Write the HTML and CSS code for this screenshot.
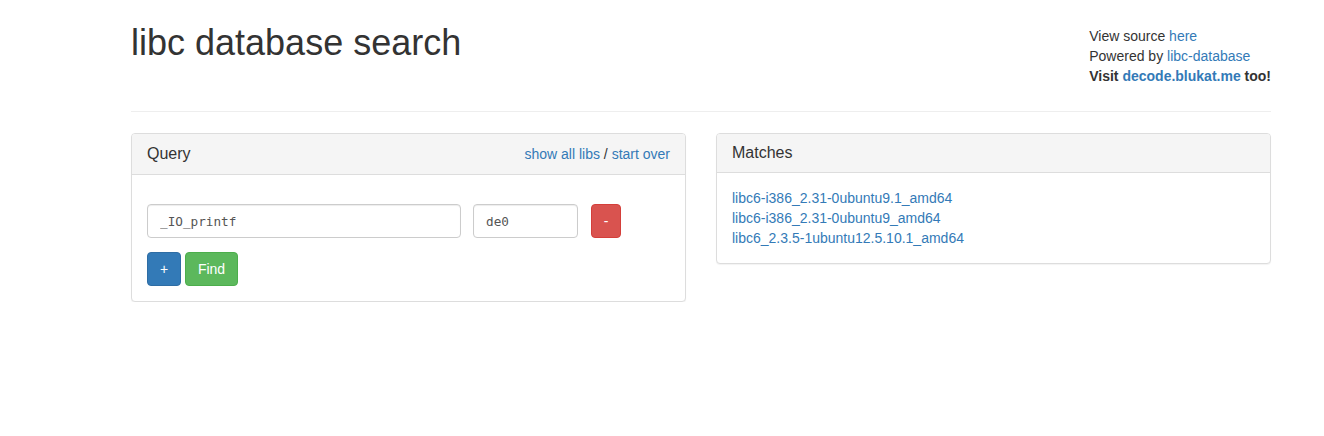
FILE: index.html
```html
<!DOCTYPE html>
<html>
<head>
<meta charset="utf-8">
<title>libc database search</title>
<link rel="stylesheet" href="styles.css">
</head>
<body>
<div class="container">
  <div class="page-header">
    <h1 class="title">libc database search</h1>
    <div class="about">
      <div>View source <a href="#">here</a></div>
      <div>Powered by <a href="#">libc-database</a></div>
      <div class="bold">Visit <a href="#">decode.blukat.me</a> too!</div>
    </div>
  </div>
  <div class="row">
    <div class="panel">
      <div class="panel-heading query-heading">
        <span class="panel-title">Query</span>
        <span class="heading-links"><a href="#">show all libs</a> / <a href="#">start over</a></span>
      </div>
      <div class="panel-body query-body">
        <div class="query-row">
          <input class="form-control sym" type="text" value="_IO_printf">
          <input class="form-control addr" type="text" value="de0">
          <button class="btn btn-danger btn-remove">-</button>
        </div>
        <div class="button-row">
          <button class="btn btn-primary btn-add">+</button>
          <button class="btn btn-success btn-find">Find</button>
        </div>
      </div>
    </div>
    <div class="panel matches-panel">
      <div class="panel-heading">
        <span class="panel-title">Matches</span>
      </div>
      <div class="panel-body">
        <div><a href="#">libc6-i386_2.31-0ubuntu9.1_amd64</a></div>
        <div><a href="#">libc6-i386_2.31-0ubuntu9_amd64</a></div>
        <div><a href="#">libc6_2.3.5-1ubuntu12.5.10.1_amd64</a></div>
      </div>
    </div>
  </div>
</div>
</body>
</html>
```
FILE: styles.css
```css
* { box-sizing: border-box; }
html, body { margin: 0; padding: 0; background: #fff; }
body {
  font-family: "Liberation Sans", Arial, Helvetica, sans-serif;
  font-size: 14px;
  line-height: 20px;
  color: #333;
}
a { color: #337ab7; text-decoration: none; }
.container {
  width: 1140px;
  margin-left: 131px;
}
.page-header {
  display: flex;
  justify-content: space-between;
  align-items: flex-start;
  padding-top: 23px;
  padding-bottom: 25px;
  border-bottom: 1px solid #eee;
  margin-bottom: 21px;
}
.title {
  margin: 0;
  font-size: 36px;
  font-weight: 500;
  line-height: 39.6px;
  color: #333;
}
.about {
  margin-top: 3px;
  white-space: nowrap;
}
.bold { font-weight: bold; }
.row {
  display: flex;
  align-items: flex-start;
  gap: 30px;
}
.panel {
  width: 555px;
  border: 1px solid #ddd;
  border-radius: 4px;
  background: #fff;
  box-shadow: 0 1px 1px rgba(0,0,0,0.05);
}
.panel-heading {
  background: #f5f5f5;
  border-bottom: 1px solid #ddd;
  border-radius: 3px 3px 0 0;
  padding: 10px 15px;
  display: flex;
  justify-content: space-between;
  align-items: center;
}
.panel-title {
  font-size: 16px;
  line-height: 17.6px;
  color: #333;
}
.heading-links { line-height: 20px; }
.panel-body { padding: 15px; }
.query-body { padding-top: 29px; }
.query-row {
  display: flex;
  align-items: center;
}
.form-control {
  height: 34px;
  padding: 6px 12px;
  border: 1px solid #ccc;
  border-radius: 4px;
  font-family: "DejaVu Sans Mono", monospace;
  font-size: 12.7px;
  color: #555;
  background: #fff;
  box-shadow: inset 0 1px 1px rgba(0,0,0,0.075);
  outline: none;
}
.sym { width: 314px; margin-right: 12px; }
.addr { width: 105px; margin-right: 13px; }
.btn {
  height: 34px;
  border: 1px solid transparent;
  border-radius: 4px;
  color: #fff;
  font-family: "Liberation Sans", Arial, sans-serif;
  font-size: 14px;
  line-height: 20px;
  padding: 6px 12px;
  cursor: pointer;
}
.btn-danger { background: #d9534f; border-color: #d43f3a; }
.btn-primary { background: #337ab7; border-color: #2e6da4; }
.btn-success { background: #5cb85c; border-color: #4cae4c; }
.btn-remove { width: 30px; padding: 6px 0; }
.button-row {
  display: flex;
  gap: 4px;
  margin-top: 14px;
}
.btn-add { width: 34px; padding: 6px 0; }
.btn-find { width: 53px; padding: 6px 0; }
```
